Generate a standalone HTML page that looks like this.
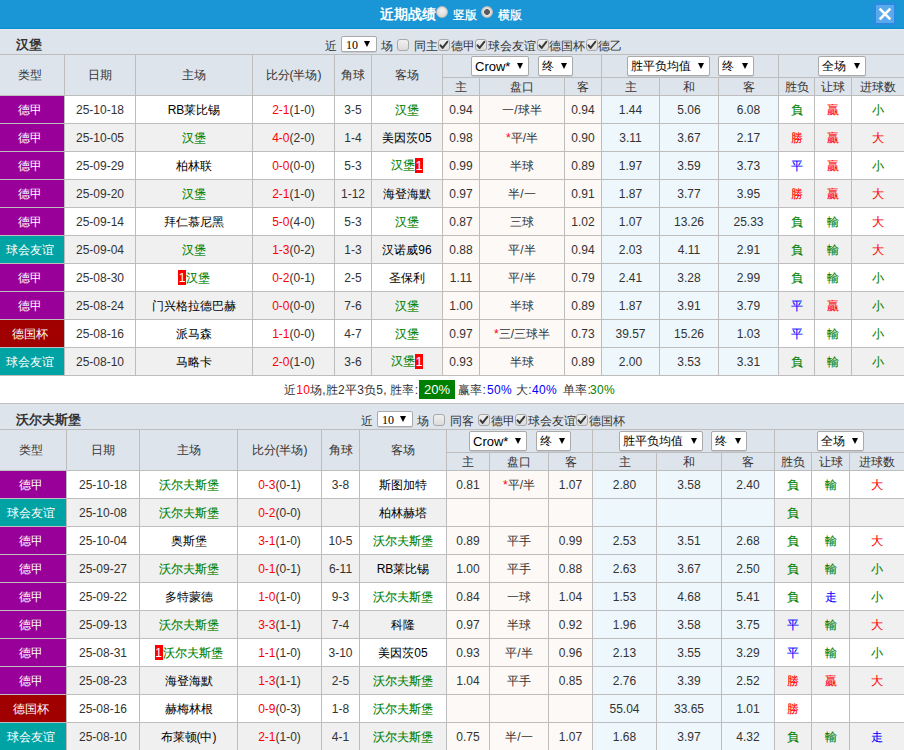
<!DOCTYPE html><html><head><meta charset="utf-8"><style>
*{margin:0;padding:0;box-sizing:content-box}
html,body{width:904px;height:750px;overflow:hidden;background:#fff}
body{position:relative;font-family:"Liberation Sans",sans-serif;font-size:12px;color:#333}
body>div{position:absolute}
.k{-webkit-text-stroke:0.1px}
.c{display:flex;align-items:center;justify-content:center;white-space:nowrap;line-height:14px}
.t{white-space:nowrap;line-height:14px}
.bd{display:inline-block;background:#f00;color:#fff;font-weight:normal;width:8px;height:15px;line-height:17px;text-align:center;font-size:12px;vertical-align:top}
.sel{background:#fff;border:1px solid #aaa;border-radius:2px;box-sizing:border-box;color:#000;font-size:12px;line-height:18px;box-shadow:0 1px 0 rgba(0,0,0,.10)}
.sel .st{position:absolute;left:3px;top:0}
.sel .arr{position:absolute;right:5px;top:6px;width:0;height:0;border-left:3.5px solid transparent;border-right:3.5px solid transparent;border-top:6px solid #000}
.s10{font-family:"Liberation Serif",serif;font-size:12px;line-height:15px;border-radius:2px}
.s10 .st{left:4px;top:1px}
.s10 .arr{left:22px;right:auto;top:4px;border-top-width:6px}
.cb{width:10px;height:10px;border:1px solid #a8a8a8;border-radius:3px;background:linear-gradient(#f0f0f0,#dcdcdc)}
.cb svg{position:absolute;left:-1px;top:-1px}
.radio{width:12px;height:12px;border-radius:50%;background:radial-gradient(circle at 50% 40%,#f4f4f4,#cfcfcf);border:1px solid #bbb;box-sizing:border-box}
.radio.on{background:radial-gradient(circle at 50% 50%,#5a5a5a 0,#5a5a5a 2.6px,#e8e8e8 3.2px,#c8c8c8 6px)}
.gb{display:inline-block;background:#008000;color:#fff;padding:0 5px;line-height:19px;font-size:13px}
</style></head><body><div style="left:0px;top:0px;width:904px;height:28px;background:#1a96d6"></div>
<div style="left:0px;top:28px;width:904px;height:1px;background:#0b8dd3"></div>
<div class="t" style="left:380px;top:6px;color:#fff;font-weight:bold;font-size:14px;line-height:16px">近期战绩</div>
<div class="radio" style="left:436px;top:6px"></div>
<div class="t" style="left:453px;top:7px;color:#fff;font-size:12px;line-height:14px;top:8px;-webkit-text-stroke:0.3px #fff">竖版</div>
<div class="radio on" style="left:481px;top:6px"></div>
<div class="t" style="left:498px;top:7px;color:#fff;font-size:12px;line-height:14px;top:8px;-webkit-text-stroke:0.3px #fff">横版</div>
<div style="left:874px;top:3px;width:18px;height:18px;border:2px solid #2b89e1;background:#5aa9ea"><svg width="18" height="18" viewBox="0 0 18 18"><path d="M4.6 4.6 L13.4 13.4 M13.4 4.6 L4.6 13.4" stroke="#fff" stroke-width="2.6" stroke-linecap="square"/></svg></div>
<div style="left:0px;top:29px;width:904px;height:1px;background:#e8eaef"></div>
<div style="left:0px;top:30px;width:904px;height:24px;background:#dee4ec"></div>
<div class="t" style="left:16px;top:37px;font-weight:bold;font-size:13px;line-height:16px;color:#333">汉堡</div>
<div class="t" style="left:325px;top:39px;">近</div>
<div class="sel s10" style="left:341px;top:36px;width:36px;height:16px"><span class="st">10</span><span class="arr"></span></div>
<div class="t" style="left:381px;top:39px;">场</div>
<div class="cb" style="left:397px;top:39px"></div>
<div class="t" style="left:414px;top:39px;">同主</div>
<div class="cb" style="left:438px;top:39px"><svg width="12" height="12" viewBox="0 0 12 12"><path d="M2.5 6.3 L4.6 8.9 L9.3 2.8" stroke="#3a3a3a" stroke-width="2" fill="none" stroke-linecap="round" stroke-linejoin="round"/></svg></div>
<div class="t" style="left:451px;top:39px;">德甲</div>
<div class="cb" style="left:475px;top:39px"><svg width="12" height="12" viewBox="0 0 12 12"><path d="M2.5 6.3 L4.6 8.9 L9.3 2.8" stroke="#3a3a3a" stroke-width="2" fill="none" stroke-linecap="round" stroke-linejoin="round"/></svg></div>
<div class="t" style="left:488px;top:39px;">球会友谊</div>
<div class="cb" style="left:537px;top:39px"><svg width="12" height="12" viewBox="0 0 12 12"><path d="M2.5 6.3 L4.6 8.9 L9.3 2.8" stroke="#3a3a3a" stroke-width="2" fill="none" stroke-linecap="round" stroke-linejoin="round"/></svg></div>
<div class="t" style="left:549px;top:39px;">德国杯</div>
<div class="cb" style="left:586px;top:39px"><svg width="12" height="12" viewBox="0 0 12 12"><path d="M2.5 6.3 L4.6 8.9 L9.3 2.8" stroke="#3a3a3a" stroke-width="2" fill="none" stroke-linecap="round" stroke-linejoin="round"/></svg></div>
<div class="t" style="left:598px;top:39px;">德乙</div>
<div style="left:0px;top:54px;width:904px;height:1px;background:#bdbdbd"></div>
<div style="left:0px;top:55px;width:904px;height:40px;background:#dee4ec"></div>
<div style="left:0px;top:95px;width:904px;height:1px;background:#bdbdbd"></div>
<div style="left:64px;top:54px;width:1px;height:41px;background:#bdbdbd"></div>
<div style="left:135px;top:54px;width:1px;height:41px;background:#bdbdbd"></div>
<div style="left:252px;top:54px;width:1px;height:41px;background:#bdbdbd"></div>
<div style="left:334px;top:54px;width:1px;height:41px;background:#bdbdbd"></div>
<div style="left:371px;top:54px;width:1px;height:41px;background:#bdbdbd"></div>
<div style="left:442px;top:54px;width:1px;height:41px;background:#bdbdbd"></div>
<div style="left:601px;top:54px;width:1px;height:41px;background:#bdbdbd"></div>
<div style="left:778px;top:54px;width:1px;height:41px;background:#bdbdbd"></div>
<div style="left:479px;top:77px;width:1px;height:18px;background:#bdbdbd"></div>
<div style="left:564px;top:77px;width:1px;height:18px;background:#bdbdbd"></div>
<div style="left:659px;top:77px;width:1px;height:18px;background:#bdbdbd"></div>
<div style="left:718px;top:77px;width:1px;height:18px;background:#bdbdbd"></div>
<div style="left:814px;top:77px;width:1px;height:18px;background:#bdbdbd"></div>
<div style="left:851px;top:77px;width:1px;height:18px;background:#bdbdbd"></div>
<div style="left:442px;top:77px;width:462px;height:1px;background:#bdbdbd"></div>
<div class="c" style="left:-5px;top:55px;width:69px;height:40px;">类型</div>
<div class="c" style="left:65px;top:55px;width:70px;height:40px;">日期</div>
<div class="c" style="left:136px;top:55px;width:116px;height:40px;">主场</div>
<div class="c" style="left:253px;top:55px;width:81px;height:40px;">比分(半场)</div>
<div class="c" style="left:335px;top:55px;width:36px;height:40px;">角球</div>
<div class="c" style="left:372px;top:55px;width:70px;height:40px;">客场</div>
<div class="c" style="left:443px;top:78px;width:36px;height:17px;">主</div>
<div class="c" style="left:480px;top:78px;width:84px;height:17px;">盘口</div>
<div class="c" style="left:565px;top:78px;width:36px;height:17px;">客</div>
<div class="c" style="left:602px;top:78px;width:57px;height:17px;">主</div>
<div class="c" style="left:660px;top:78px;width:58px;height:17px;">和</div>
<div class="c" style="left:719px;top:78px;width:59px;height:17px;">客</div>
<div class="c" style="left:779px;top:78px;width:35px;height:17px;">胜负</div>
<div class="c" style="left:815px;top:78px;width:36px;height:17px;">让球</div>
<div class="c" style="left:852px;top:78px;width:52px;height:17px;">进球数</div>
<div class="sel" style="left:471px;top:56px;width:58px;height:20px"><span class="st" style="font-size:13px;top:1px">Crow*</span><span class="arr"></span></div>
<div class="sel" style="left:538px;top:56px;width:35px;height:20px"><span class="st">终</span><span class="arr"></span></div>
<div class="sel" style="left:627px;top:56px;width:83px;height:20px"><span class="st">胜平负均值</span><span class="arr"></span></div>
<div class="sel" style="left:718px;top:56px;width:36px;height:20px"><span class="st">终</span><span class="arr"></span></div>
<div class="sel" style="left:818px;top:56px;width:48px;height:20px"><span class="st">全场</span><span class="arr"></span></div>
<div style="left:64px;top:96px;width:379px;height:27px;background:#ffffff"></div>
<div style="left:442px;top:96px;width:160px;height:27px;background:#fdf9f7"></div>
<div style="left:601px;top:96px;width:178px;height:27px;background:#eef7fc"></div>
<div style="left:778px;top:96px;width:126px;height:27px;background:#ffffff"></div>
<div style="left:0px;top:96px;width:64px;height:27px;background:#990099"></div>
<div style="left:0px;top:123px;width:904px;height:1px;background:#bdbdbd"></div>
<div style="left:64px;top:96px;width:1px;height:27px;background:#bdbdbd"></div>
<div style="left:135px;top:96px;width:1px;height:27px;background:#bdbdbd"></div>
<div style="left:252px;top:96px;width:1px;height:27px;background:#bdbdbd"></div>
<div style="left:334px;top:96px;width:1px;height:27px;background:#bdbdbd"></div>
<div style="left:371px;top:96px;width:1px;height:27px;background:#bdbdbd"></div>
<div style="left:442px;top:96px;width:1px;height:27px;background:#bdbdbd"></div>
<div style="left:479px;top:96px;width:1px;height:27px;background:#bdbdbd"></div>
<div style="left:564px;top:96px;width:1px;height:27px;background:#bdbdbd"></div>
<div style="left:601px;top:96px;width:1px;height:27px;background:#bdbdbd"></div>
<div style="left:659px;top:96px;width:1px;height:27px;background:#bdbdbd"></div>
<div style="left:718px;top:96px;width:1px;height:27px;background:#bdbdbd"></div>
<div style="left:778px;top:96px;width:1px;height:27px;background:#bdbdbd"></div>
<div style="left:814px;top:96px;width:1px;height:27px;background:#bdbdbd"></div>
<div style="left:851px;top:96px;width:1px;height:27px;background:#bdbdbd"></div>
<div class="c" style="left:-5px;top:96px;width:69px;height:27px;color:#fff">德甲</div>
<div class="c" style="left:65px;top:96px;width:70px;height:27px;">25-10-18</div>
<div class="c" style="left:136px;top:96px;width:116px;height:27px;color:#000">RB莱比锡</div>
<div class="c" style="left:253px;top:96px;width:81px;height:27px;"><span style="color:#ff0000">2-1</span>(1-0)</div>
<div class="c" style="left:335px;top:96px;width:36px;height:27px;">3-5</div>
<div class="c" style="left:372px;top:96px;width:70px;height:27px;color:#000"><span class="k" style="color:#008000">汉堡</span></div>
<div class="c" style="left:443px;top:96px;width:36px;height:27px;">0.94</div>
<div class="c" style="left:480px;top:96px;width:84px;height:27px;">一/球半</div>
<div class="c" style="left:565px;top:96px;width:36px;height:27px;">0.94</div>
<div class="c" style="left:602px;top:96px;width:57px;height:27px;">1.44</div>
<div class="c" style="left:660px;top:96px;width:58px;height:27px;">5.06</div>
<div class="c" style="left:719px;top:96px;width:59px;height:27px;">6.08</div>
<div class="c" style="left:779px;top:96px;width:35px;height:27px;"><span class="k" style="color:#008000">負</span></div>
<div class="c" style="left:815px;top:96px;width:36px;height:27px;"><span class="k" style="color:#ff0000">贏</span></div>
<div class="c" style="left:852px;top:96px;width:52px;height:27px;"><span class="k" style="color:#008000">小</span></div>
<div style="left:64px;top:124px;width:379px;height:27px;background:#f0f0f0"></div>
<div style="left:442px;top:124px;width:160px;height:27px;background:#fdf9f7"></div>
<div style="left:601px;top:124px;width:178px;height:27px;background:#eef7fc"></div>
<div style="left:778px;top:124px;width:126px;height:27px;background:#f0f0f0"></div>
<div style="left:0px;top:124px;width:64px;height:27px;background:#990099"></div>
<div style="left:0px;top:151px;width:904px;height:1px;background:#bdbdbd"></div>
<div style="left:64px;top:124px;width:1px;height:27px;background:#bdbdbd"></div>
<div style="left:135px;top:124px;width:1px;height:27px;background:#bdbdbd"></div>
<div style="left:252px;top:124px;width:1px;height:27px;background:#bdbdbd"></div>
<div style="left:334px;top:124px;width:1px;height:27px;background:#bdbdbd"></div>
<div style="left:371px;top:124px;width:1px;height:27px;background:#bdbdbd"></div>
<div style="left:442px;top:124px;width:1px;height:27px;background:#bdbdbd"></div>
<div style="left:479px;top:124px;width:1px;height:27px;background:#bdbdbd"></div>
<div style="left:564px;top:124px;width:1px;height:27px;background:#bdbdbd"></div>
<div style="left:601px;top:124px;width:1px;height:27px;background:#bdbdbd"></div>
<div style="left:659px;top:124px;width:1px;height:27px;background:#bdbdbd"></div>
<div style="left:718px;top:124px;width:1px;height:27px;background:#bdbdbd"></div>
<div style="left:778px;top:124px;width:1px;height:27px;background:#bdbdbd"></div>
<div style="left:814px;top:124px;width:1px;height:27px;background:#bdbdbd"></div>
<div style="left:851px;top:124px;width:1px;height:27px;background:#bdbdbd"></div>
<div class="c" style="left:-5px;top:124px;width:69px;height:27px;color:#fff">德甲</div>
<div class="c" style="left:65px;top:124px;width:70px;height:27px;">25-10-05</div>
<div class="c" style="left:136px;top:124px;width:116px;height:27px;color:#000"><span class="k" style="color:#008000">汉堡</span></div>
<div class="c" style="left:253px;top:124px;width:81px;height:27px;"><span style="color:#ff0000">4-0</span>(2-0)</div>
<div class="c" style="left:335px;top:124px;width:36px;height:27px;">1-4</div>
<div class="c" style="left:372px;top:124px;width:70px;height:27px;color:#000">美因茨05</div>
<div class="c" style="left:443px;top:124px;width:36px;height:27px;">0.98</div>
<div class="c" style="left:480px;top:124px;width:84px;height:27px;"><span style="color:#ff0000">*</span>平/半</div>
<div class="c" style="left:565px;top:124px;width:36px;height:27px;">0.90</div>
<div class="c" style="left:602px;top:124px;width:57px;height:27px;">3.11</div>
<div class="c" style="left:660px;top:124px;width:58px;height:27px;">3.67</div>
<div class="c" style="left:719px;top:124px;width:59px;height:27px;">2.17</div>
<div class="c" style="left:779px;top:124px;width:35px;height:27px;"><span class="k" style="color:#ff0000">勝</span></div>
<div class="c" style="left:815px;top:124px;width:36px;height:27px;"><span class="k" style="color:#ff0000">贏</span></div>
<div class="c" style="left:852px;top:124px;width:52px;height:27px;"><span class="k" style="color:#ff0000">大</span></div>
<div style="left:64px;top:152px;width:379px;height:27px;background:#ffffff"></div>
<div style="left:442px;top:152px;width:160px;height:27px;background:#fdf9f7"></div>
<div style="left:601px;top:152px;width:178px;height:27px;background:#eef7fc"></div>
<div style="left:778px;top:152px;width:126px;height:27px;background:#ffffff"></div>
<div style="left:0px;top:152px;width:64px;height:27px;background:#990099"></div>
<div style="left:0px;top:179px;width:904px;height:1px;background:#bdbdbd"></div>
<div style="left:64px;top:152px;width:1px;height:27px;background:#bdbdbd"></div>
<div style="left:135px;top:152px;width:1px;height:27px;background:#bdbdbd"></div>
<div style="left:252px;top:152px;width:1px;height:27px;background:#bdbdbd"></div>
<div style="left:334px;top:152px;width:1px;height:27px;background:#bdbdbd"></div>
<div style="left:371px;top:152px;width:1px;height:27px;background:#bdbdbd"></div>
<div style="left:442px;top:152px;width:1px;height:27px;background:#bdbdbd"></div>
<div style="left:479px;top:152px;width:1px;height:27px;background:#bdbdbd"></div>
<div style="left:564px;top:152px;width:1px;height:27px;background:#bdbdbd"></div>
<div style="left:601px;top:152px;width:1px;height:27px;background:#bdbdbd"></div>
<div style="left:659px;top:152px;width:1px;height:27px;background:#bdbdbd"></div>
<div style="left:718px;top:152px;width:1px;height:27px;background:#bdbdbd"></div>
<div style="left:778px;top:152px;width:1px;height:27px;background:#bdbdbd"></div>
<div style="left:814px;top:152px;width:1px;height:27px;background:#bdbdbd"></div>
<div style="left:851px;top:152px;width:1px;height:27px;background:#bdbdbd"></div>
<div class="c" style="left:-5px;top:152px;width:69px;height:27px;color:#fff">德甲</div>
<div class="c" style="left:65px;top:152px;width:70px;height:27px;">25-09-29</div>
<div class="c" style="left:136px;top:152px;width:116px;height:27px;color:#000">柏林联</div>
<div class="c" style="left:253px;top:152px;width:81px;height:27px;"><span style="color:#ff0000">0-0</span>(0-0)</div>
<div class="c" style="left:335px;top:152px;width:36px;height:27px;">5-3</div>
<div class="c" style="left:372px;top:152px;width:70px;height:27px;color:#000"><span class="k" style="color:#008000">汉堡<span class="bd">1</span></span></div>
<div class="c" style="left:443px;top:152px;width:36px;height:27px;">0.99</div>
<div class="c" style="left:480px;top:152px;width:84px;height:27px;">半球</div>
<div class="c" style="left:565px;top:152px;width:36px;height:27px;">0.89</div>
<div class="c" style="left:602px;top:152px;width:57px;height:27px;">1.97</div>
<div class="c" style="left:660px;top:152px;width:58px;height:27px;">3.59</div>
<div class="c" style="left:719px;top:152px;width:59px;height:27px;">3.73</div>
<div class="c" style="left:779px;top:152px;width:35px;height:27px;"><span class="k" style="color:#0000ff">平</span></div>
<div class="c" style="left:815px;top:152px;width:36px;height:27px;"><span class="k" style="color:#ff0000">贏</span></div>
<div class="c" style="left:852px;top:152px;width:52px;height:27px;"><span class="k" style="color:#008000">小</span></div>
<div style="left:64px;top:180px;width:379px;height:27px;background:#f0f0f0"></div>
<div style="left:442px;top:180px;width:160px;height:27px;background:#fdf9f7"></div>
<div style="left:601px;top:180px;width:178px;height:27px;background:#eef7fc"></div>
<div style="left:778px;top:180px;width:126px;height:27px;background:#f0f0f0"></div>
<div style="left:0px;top:180px;width:64px;height:27px;background:#990099"></div>
<div style="left:0px;top:207px;width:904px;height:1px;background:#bdbdbd"></div>
<div style="left:64px;top:180px;width:1px;height:27px;background:#bdbdbd"></div>
<div style="left:135px;top:180px;width:1px;height:27px;background:#bdbdbd"></div>
<div style="left:252px;top:180px;width:1px;height:27px;background:#bdbdbd"></div>
<div style="left:334px;top:180px;width:1px;height:27px;background:#bdbdbd"></div>
<div style="left:371px;top:180px;width:1px;height:27px;background:#bdbdbd"></div>
<div style="left:442px;top:180px;width:1px;height:27px;background:#bdbdbd"></div>
<div style="left:479px;top:180px;width:1px;height:27px;background:#bdbdbd"></div>
<div style="left:564px;top:180px;width:1px;height:27px;background:#bdbdbd"></div>
<div style="left:601px;top:180px;width:1px;height:27px;background:#bdbdbd"></div>
<div style="left:659px;top:180px;width:1px;height:27px;background:#bdbdbd"></div>
<div style="left:718px;top:180px;width:1px;height:27px;background:#bdbdbd"></div>
<div style="left:778px;top:180px;width:1px;height:27px;background:#bdbdbd"></div>
<div style="left:814px;top:180px;width:1px;height:27px;background:#bdbdbd"></div>
<div style="left:851px;top:180px;width:1px;height:27px;background:#bdbdbd"></div>
<div class="c" style="left:-5px;top:180px;width:69px;height:27px;color:#fff">德甲</div>
<div class="c" style="left:65px;top:180px;width:70px;height:27px;">25-09-20</div>
<div class="c" style="left:136px;top:180px;width:116px;height:27px;color:#000"><span class="k" style="color:#008000">汉堡</span></div>
<div class="c" style="left:253px;top:180px;width:81px;height:27px;"><span style="color:#ff0000">2-1</span>(1-0)</div>
<div class="c" style="left:335px;top:180px;width:36px;height:27px;">1-12</div>
<div class="c" style="left:372px;top:180px;width:70px;height:27px;color:#000">海登海默</div>
<div class="c" style="left:443px;top:180px;width:36px;height:27px;">0.97</div>
<div class="c" style="left:480px;top:180px;width:84px;height:27px;">半/一</div>
<div class="c" style="left:565px;top:180px;width:36px;height:27px;">0.91</div>
<div class="c" style="left:602px;top:180px;width:57px;height:27px;">1.87</div>
<div class="c" style="left:660px;top:180px;width:58px;height:27px;">3.77</div>
<div class="c" style="left:719px;top:180px;width:59px;height:27px;">3.95</div>
<div class="c" style="left:779px;top:180px;width:35px;height:27px;"><span class="k" style="color:#ff0000">勝</span></div>
<div class="c" style="left:815px;top:180px;width:36px;height:27px;"><span class="k" style="color:#ff0000">贏</span></div>
<div class="c" style="left:852px;top:180px;width:52px;height:27px;"><span class="k" style="color:#ff0000">大</span></div>
<div style="left:64px;top:208px;width:379px;height:27px;background:#ffffff"></div>
<div style="left:442px;top:208px;width:160px;height:27px;background:#fdf9f7"></div>
<div style="left:601px;top:208px;width:178px;height:27px;background:#eef7fc"></div>
<div style="left:778px;top:208px;width:126px;height:27px;background:#ffffff"></div>
<div style="left:0px;top:208px;width:64px;height:27px;background:#990099"></div>
<div style="left:0px;top:235px;width:904px;height:1px;background:#bdbdbd"></div>
<div style="left:64px;top:208px;width:1px;height:27px;background:#bdbdbd"></div>
<div style="left:135px;top:208px;width:1px;height:27px;background:#bdbdbd"></div>
<div style="left:252px;top:208px;width:1px;height:27px;background:#bdbdbd"></div>
<div style="left:334px;top:208px;width:1px;height:27px;background:#bdbdbd"></div>
<div style="left:371px;top:208px;width:1px;height:27px;background:#bdbdbd"></div>
<div style="left:442px;top:208px;width:1px;height:27px;background:#bdbdbd"></div>
<div style="left:479px;top:208px;width:1px;height:27px;background:#bdbdbd"></div>
<div style="left:564px;top:208px;width:1px;height:27px;background:#bdbdbd"></div>
<div style="left:601px;top:208px;width:1px;height:27px;background:#bdbdbd"></div>
<div style="left:659px;top:208px;width:1px;height:27px;background:#bdbdbd"></div>
<div style="left:718px;top:208px;width:1px;height:27px;background:#bdbdbd"></div>
<div style="left:778px;top:208px;width:1px;height:27px;background:#bdbdbd"></div>
<div style="left:814px;top:208px;width:1px;height:27px;background:#bdbdbd"></div>
<div style="left:851px;top:208px;width:1px;height:27px;background:#bdbdbd"></div>
<div class="c" style="left:-5px;top:208px;width:69px;height:27px;color:#fff">德甲</div>
<div class="c" style="left:65px;top:208px;width:70px;height:27px;">25-09-14</div>
<div class="c" style="left:136px;top:208px;width:116px;height:27px;color:#000">拜仁慕尼黑</div>
<div class="c" style="left:253px;top:208px;width:81px;height:27px;"><span style="color:#ff0000">5-0</span>(4-0)</div>
<div class="c" style="left:335px;top:208px;width:36px;height:27px;">5-3</div>
<div class="c" style="left:372px;top:208px;width:70px;height:27px;color:#000"><span class="k" style="color:#008000">汉堡</span></div>
<div class="c" style="left:443px;top:208px;width:36px;height:27px;">0.87</div>
<div class="c" style="left:480px;top:208px;width:84px;height:27px;">三球</div>
<div class="c" style="left:565px;top:208px;width:36px;height:27px;">1.02</div>
<div class="c" style="left:602px;top:208px;width:57px;height:27px;">1.07</div>
<div class="c" style="left:660px;top:208px;width:58px;height:27px;">13.26</div>
<div class="c" style="left:719px;top:208px;width:59px;height:27px;">25.33</div>
<div class="c" style="left:779px;top:208px;width:35px;height:27px;"><span class="k" style="color:#008000">負</span></div>
<div class="c" style="left:815px;top:208px;width:36px;height:27px;"><span class="k" style="color:#008000">輸</span></div>
<div class="c" style="left:852px;top:208px;width:52px;height:27px;"><span class="k" style="color:#ff0000">大</span></div>
<div style="left:64px;top:236px;width:379px;height:27px;background:#f0f0f0"></div>
<div style="left:442px;top:236px;width:160px;height:27px;background:#fdf9f7"></div>
<div style="left:601px;top:236px;width:178px;height:27px;background:#eef7fc"></div>
<div style="left:778px;top:236px;width:126px;height:27px;background:#f0f0f0"></div>
<div style="left:0px;top:236px;width:64px;height:27px;background:#00a3a3"></div>
<div style="left:0px;top:263px;width:904px;height:1px;background:#bdbdbd"></div>
<div style="left:64px;top:236px;width:1px;height:27px;background:#bdbdbd"></div>
<div style="left:135px;top:236px;width:1px;height:27px;background:#bdbdbd"></div>
<div style="left:252px;top:236px;width:1px;height:27px;background:#bdbdbd"></div>
<div style="left:334px;top:236px;width:1px;height:27px;background:#bdbdbd"></div>
<div style="left:371px;top:236px;width:1px;height:27px;background:#bdbdbd"></div>
<div style="left:442px;top:236px;width:1px;height:27px;background:#bdbdbd"></div>
<div style="left:479px;top:236px;width:1px;height:27px;background:#bdbdbd"></div>
<div style="left:564px;top:236px;width:1px;height:27px;background:#bdbdbd"></div>
<div style="left:601px;top:236px;width:1px;height:27px;background:#bdbdbd"></div>
<div style="left:659px;top:236px;width:1px;height:27px;background:#bdbdbd"></div>
<div style="left:718px;top:236px;width:1px;height:27px;background:#bdbdbd"></div>
<div style="left:778px;top:236px;width:1px;height:27px;background:#bdbdbd"></div>
<div style="left:814px;top:236px;width:1px;height:27px;background:#bdbdbd"></div>
<div style="left:851px;top:236px;width:1px;height:27px;background:#bdbdbd"></div>
<div class="c" style="left:-5px;top:236px;width:69px;height:27px;color:#fff">球会友谊</div>
<div class="c" style="left:65px;top:236px;width:70px;height:27px;">25-09-04</div>
<div class="c" style="left:136px;top:236px;width:116px;height:27px;color:#000"><span class="k" style="color:#008000">汉堡</span></div>
<div class="c" style="left:253px;top:236px;width:81px;height:27px;"><span style="color:#ff0000">1-3</span>(0-2)</div>
<div class="c" style="left:335px;top:236px;width:36px;height:27px;">1-3</div>
<div class="c" style="left:372px;top:236px;width:70px;height:27px;color:#000">汉诺威96</div>
<div class="c" style="left:443px;top:236px;width:36px;height:27px;">0.88</div>
<div class="c" style="left:480px;top:236px;width:84px;height:27px;">平/半</div>
<div class="c" style="left:565px;top:236px;width:36px;height:27px;">0.94</div>
<div class="c" style="left:602px;top:236px;width:57px;height:27px;">2.03</div>
<div class="c" style="left:660px;top:236px;width:58px;height:27px;">4.11</div>
<div class="c" style="left:719px;top:236px;width:59px;height:27px;">2.91</div>
<div class="c" style="left:779px;top:236px;width:35px;height:27px;"><span class="k" style="color:#008000">負</span></div>
<div class="c" style="left:815px;top:236px;width:36px;height:27px;"><span class="k" style="color:#008000">輸</span></div>
<div class="c" style="left:852px;top:236px;width:52px;height:27px;"><span class="k" style="color:#ff0000">大</span></div>
<div style="left:64px;top:264px;width:379px;height:27px;background:#ffffff"></div>
<div style="left:442px;top:264px;width:160px;height:27px;background:#fdf9f7"></div>
<div style="left:601px;top:264px;width:178px;height:27px;background:#eef7fc"></div>
<div style="left:778px;top:264px;width:126px;height:27px;background:#ffffff"></div>
<div style="left:0px;top:264px;width:64px;height:27px;background:#990099"></div>
<div style="left:0px;top:291px;width:904px;height:1px;background:#bdbdbd"></div>
<div style="left:64px;top:264px;width:1px;height:27px;background:#bdbdbd"></div>
<div style="left:135px;top:264px;width:1px;height:27px;background:#bdbdbd"></div>
<div style="left:252px;top:264px;width:1px;height:27px;background:#bdbdbd"></div>
<div style="left:334px;top:264px;width:1px;height:27px;background:#bdbdbd"></div>
<div style="left:371px;top:264px;width:1px;height:27px;background:#bdbdbd"></div>
<div style="left:442px;top:264px;width:1px;height:27px;background:#bdbdbd"></div>
<div style="left:479px;top:264px;width:1px;height:27px;background:#bdbdbd"></div>
<div style="left:564px;top:264px;width:1px;height:27px;background:#bdbdbd"></div>
<div style="left:601px;top:264px;width:1px;height:27px;background:#bdbdbd"></div>
<div style="left:659px;top:264px;width:1px;height:27px;background:#bdbdbd"></div>
<div style="left:718px;top:264px;width:1px;height:27px;background:#bdbdbd"></div>
<div style="left:778px;top:264px;width:1px;height:27px;background:#bdbdbd"></div>
<div style="left:814px;top:264px;width:1px;height:27px;background:#bdbdbd"></div>
<div style="left:851px;top:264px;width:1px;height:27px;background:#bdbdbd"></div>
<div class="c" style="left:-5px;top:264px;width:69px;height:27px;color:#fff">德甲</div>
<div class="c" style="left:65px;top:264px;width:70px;height:27px;">25-08-30</div>
<div class="c" style="left:136px;top:264px;width:116px;height:27px;color:#000"><span class="bd">1</span><span class="k" style="color:#008000">汉堡</span></div>
<div class="c" style="left:253px;top:264px;width:81px;height:27px;"><span style="color:#ff0000">0-2</span>(0-1)</div>
<div class="c" style="left:335px;top:264px;width:36px;height:27px;">2-5</div>
<div class="c" style="left:372px;top:264px;width:70px;height:27px;color:#000">圣保利</div>
<div class="c" style="left:443px;top:264px;width:36px;height:27px;">1.11</div>
<div class="c" style="left:480px;top:264px;width:84px;height:27px;">平/半</div>
<div class="c" style="left:565px;top:264px;width:36px;height:27px;">0.79</div>
<div class="c" style="left:602px;top:264px;width:57px;height:27px;">2.41</div>
<div class="c" style="left:660px;top:264px;width:58px;height:27px;">3.28</div>
<div class="c" style="left:719px;top:264px;width:59px;height:27px;">2.99</div>
<div class="c" style="left:779px;top:264px;width:35px;height:27px;"><span class="k" style="color:#008000">負</span></div>
<div class="c" style="left:815px;top:264px;width:36px;height:27px;"><span class="k" style="color:#008000">輸</span></div>
<div class="c" style="left:852px;top:264px;width:52px;height:27px;"><span class="k" style="color:#008000">小</span></div>
<div style="left:64px;top:292px;width:379px;height:27px;background:#f0f0f0"></div>
<div style="left:442px;top:292px;width:160px;height:27px;background:#fdf9f7"></div>
<div style="left:601px;top:292px;width:178px;height:27px;background:#eef7fc"></div>
<div style="left:778px;top:292px;width:126px;height:27px;background:#f0f0f0"></div>
<div style="left:0px;top:292px;width:64px;height:27px;background:#990099"></div>
<div style="left:0px;top:319px;width:904px;height:1px;background:#bdbdbd"></div>
<div style="left:64px;top:292px;width:1px;height:27px;background:#bdbdbd"></div>
<div style="left:135px;top:292px;width:1px;height:27px;background:#bdbdbd"></div>
<div style="left:252px;top:292px;width:1px;height:27px;background:#bdbdbd"></div>
<div style="left:334px;top:292px;width:1px;height:27px;background:#bdbdbd"></div>
<div style="left:371px;top:292px;width:1px;height:27px;background:#bdbdbd"></div>
<div style="left:442px;top:292px;width:1px;height:27px;background:#bdbdbd"></div>
<div style="left:479px;top:292px;width:1px;height:27px;background:#bdbdbd"></div>
<div style="left:564px;top:292px;width:1px;height:27px;background:#bdbdbd"></div>
<div style="left:601px;top:292px;width:1px;height:27px;background:#bdbdbd"></div>
<div style="left:659px;top:292px;width:1px;height:27px;background:#bdbdbd"></div>
<div style="left:718px;top:292px;width:1px;height:27px;background:#bdbdbd"></div>
<div style="left:778px;top:292px;width:1px;height:27px;background:#bdbdbd"></div>
<div style="left:814px;top:292px;width:1px;height:27px;background:#bdbdbd"></div>
<div style="left:851px;top:292px;width:1px;height:27px;background:#bdbdbd"></div>
<div class="c" style="left:-5px;top:292px;width:69px;height:27px;color:#fff">德甲</div>
<div class="c" style="left:65px;top:292px;width:70px;height:27px;">25-08-24</div>
<div class="c" style="left:136px;top:292px;width:116px;height:27px;color:#000">门兴格拉德巴赫</div>
<div class="c" style="left:253px;top:292px;width:81px;height:27px;"><span style="color:#ff0000">0-0</span>(0-0)</div>
<div class="c" style="left:335px;top:292px;width:36px;height:27px;">7-6</div>
<div class="c" style="left:372px;top:292px;width:70px;height:27px;color:#000"><span class="k" style="color:#008000">汉堡</span></div>
<div class="c" style="left:443px;top:292px;width:36px;height:27px;">1.00</div>
<div class="c" style="left:480px;top:292px;width:84px;height:27px;">半球</div>
<div class="c" style="left:565px;top:292px;width:36px;height:27px;">0.89</div>
<div class="c" style="left:602px;top:292px;width:57px;height:27px;">1.87</div>
<div class="c" style="left:660px;top:292px;width:58px;height:27px;">3.91</div>
<div class="c" style="left:719px;top:292px;width:59px;height:27px;">3.79</div>
<div class="c" style="left:779px;top:292px;width:35px;height:27px;"><span class="k" style="color:#0000ff">平</span></div>
<div class="c" style="left:815px;top:292px;width:36px;height:27px;"><span class="k" style="color:#ff0000">贏</span></div>
<div class="c" style="left:852px;top:292px;width:52px;height:27px;"><span class="k" style="color:#008000">小</span></div>
<div style="left:64px;top:320px;width:379px;height:27px;background:#ffffff"></div>
<div style="left:442px;top:320px;width:160px;height:27px;background:#fdf9f7"></div>
<div style="left:601px;top:320px;width:178px;height:27px;background:#eef7fc"></div>
<div style="left:778px;top:320px;width:126px;height:27px;background:#ffffff"></div>
<div style="left:0px;top:320px;width:64px;height:27px;background:#a00000"></div>
<div style="left:0px;top:347px;width:904px;height:1px;background:#bdbdbd"></div>
<div style="left:64px;top:320px;width:1px;height:27px;background:#bdbdbd"></div>
<div style="left:135px;top:320px;width:1px;height:27px;background:#bdbdbd"></div>
<div style="left:252px;top:320px;width:1px;height:27px;background:#bdbdbd"></div>
<div style="left:334px;top:320px;width:1px;height:27px;background:#bdbdbd"></div>
<div style="left:371px;top:320px;width:1px;height:27px;background:#bdbdbd"></div>
<div style="left:442px;top:320px;width:1px;height:27px;background:#bdbdbd"></div>
<div style="left:479px;top:320px;width:1px;height:27px;background:#bdbdbd"></div>
<div style="left:564px;top:320px;width:1px;height:27px;background:#bdbdbd"></div>
<div style="left:601px;top:320px;width:1px;height:27px;background:#bdbdbd"></div>
<div style="left:659px;top:320px;width:1px;height:27px;background:#bdbdbd"></div>
<div style="left:718px;top:320px;width:1px;height:27px;background:#bdbdbd"></div>
<div style="left:778px;top:320px;width:1px;height:27px;background:#bdbdbd"></div>
<div style="left:814px;top:320px;width:1px;height:27px;background:#bdbdbd"></div>
<div style="left:851px;top:320px;width:1px;height:27px;background:#bdbdbd"></div>
<div class="c" style="left:-5px;top:320px;width:69px;height:27px;color:#fff">德国杯</div>
<div class="c" style="left:65px;top:320px;width:70px;height:27px;">25-08-16</div>
<div class="c" style="left:136px;top:320px;width:116px;height:27px;color:#000">派马森</div>
<div class="c" style="left:253px;top:320px;width:81px;height:27px;"><span style="color:#ff0000">1-1</span>(0-0)</div>
<div class="c" style="left:335px;top:320px;width:36px;height:27px;">4-7</div>
<div class="c" style="left:372px;top:320px;width:70px;height:27px;color:#000"><span class="k" style="color:#008000">汉堡</span></div>
<div class="c" style="left:443px;top:320px;width:36px;height:27px;">0.97</div>
<div class="c" style="left:480px;top:320px;width:84px;height:27px;"><span style="color:#ff0000">*</span>三/三球半</div>
<div class="c" style="left:565px;top:320px;width:36px;height:27px;">0.73</div>
<div class="c" style="left:602px;top:320px;width:57px;height:27px;">39.57</div>
<div class="c" style="left:660px;top:320px;width:58px;height:27px;">15.26</div>
<div class="c" style="left:719px;top:320px;width:59px;height:27px;">1.03</div>
<div class="c" style="left:779px;top:320px;width:35px;height:27px;"><span class="k" style="color:#0000ff">平</span></div>
<div class="c" style="left:815px;top:320px;width:36px;height:27px;"><span class="k" style="color:#008000">輸</span></div>
<div class="c" style="left:852px;top:320px;width:52px;height:27px;"><span class="k" style="color:#008000">小</span></div>
<div style="left:64px;top:348px;width:379px;height:27px;background:#f0f0f0"></div>
<div style="left:442px;top:348px;width:160px;height:27px;background:#fdf9f7"></div>
<div style="left:601px;top:348px;width:178px;height:27px;background:#eef7fc"></div>
<div style="left:778px;top:348px;width:126px;height:27px;background:#f0f0f0"></div>
<div style="left:0px;top:348px;width:64px;height:27px;background:#00a3a3"></div>
<div style="left:0px;top:375px;width:904px;height:1px;background:#bdbdbd"></div>
<div style="left:64px;top:348px;width:1px;height:27px;background:#bdbdbd"></div>
<div style="left:135px;top:348px;width:1px;height:27px;background:#bdbdbd"></div>
<div style="left:252px;top:348px;width:1px;height:27px;background:#bdbdbd"></div>
<div style="left:334px;top:348px;width:1px;height:27px;background:#bdbdbd"></div>
<div style="left:371px;top:348px;width:1px;height:27px;background:#bdbdbd"></div>
<div style="left:442px;top:348px;width:1px;height:27px;background:#bdbdbd"></div>
<div style="left:479px;top:348px;width:1px;height:27px;background:#bdbdbd"></div>
<div style="left:564px;top:348px;width:1px;height:27px;background:#bdbdbd"></div>
<div style="left:601px;top:348px;width:1px;height:27px;background:#bdbdbd"></div>
<div style="left:659px;top:348px;width:1px;height:27px;background:#bdbdbd"></div>
<div style="left:718px;top:348px;width:1px;height:27px;background:#bdbdbd"></div>
<div style="left:778px;top:348px;width:1px;height:27px;background:#bdbdbd"></div>
<div style="left:814px;top:348px;width:1px;height:27px;background:#bdbdbd"></div>
<div style="left:851px;top:348px;width:1px;height:27px;background:#bdbdbd"></div>
<div class="c" style="left:-5px;top:348px;width:69px;height:27px;color:#fff">球会友谊</div>
<div class="c" style="left:65px;top:348px;width:70px;height:27px;">25-08-10</div>
<div class="c" style="left:136px;top:348px;width:116px;height:27px;color:#000">马略卡</div>
<div class="c" style="left:253px;top:348px;width:81px;height:27px;"><span style="color:#ff0000">2-0</span>(1-0)</div>
<div class="c" style="left:335px;top:348px;width:36px;height:27px;">3-6</div>
<div class="c" style="left:372px;top:348px;width:70px;height:27px;color:#000"><span class="k" style="color:#008000">汉堡<span class="bd">1</span></span></div>
<div class="c" style="left:443px;top:348px;width:36px;height:27px;">0.93</div>
<div class="c" style="left:480px;top:348px;width:84px;height:27px;">半球</div>
<div class="c" style="left:565px;top:348px;width:36px;height:27px;">0.89</div>
<div class="c" style="left:602px;top:348px;width:57px;height:27px;">2.00</div>
<div class="c" style="left:660px;top:348px;width:58px;height:27px;">3.53</div>
<div class="c" style="left:719px;top:348px;width:59px;height:27px;">3.31</div>
<div class="c" style="left:779px;top:348px;width:35px;height:27px;"><span class="k" style="color:#008000">負</span></div>
<div class="c" style="left:815px;top:348px;width:36px;height:27px;"><span class="k" style="color:#008000">輸</span></div>
<div class="c" style="left:852px;top:348px;width:52px;height:27px;"><span class="k" style="color:#008000">小</span></div>
<div class="t" style="left:284px;top:382px;font-size:12px;line-height:16px;letter-spacing:0.22px">近<span style="color:#f00">10</span>场,胜2平3负5, 胜率:</div>
<div style="left:419px;top:380px;width:36px;height:19px;background:#008000;color:#fff;font-size:13px;line-height:19px;text-align:center">20%</div>
<div class="t" style="left:458px;top:382px;font-size:12px;line-height:16px;letter-spacing:0.3px">赢率:</div>
<div class="t" style="left:487px;top:382px;font-size:12px;line-height:16px;letter-spacing:0.3px;color:#00f">50%</div>
<div class="t" style="left:516px;top:382px;font-size:12px;line-height:16px;letter-spacing:0.3px">大:</div>
<div class="t" style="left:532px;top:382px;font-size:12px;line-height:16px;letter-spacing:0.3px;color:#00f">40%</div>
<div class="t" style="left:563px;top:382px;font-size:12px;line-height:16px;letter-spacing:0.3px">单率:</div>
<div class="t" style="left:590px;top:382px;font-size:12px;line-height:16px;letter-spacing:0.3px;color:#008000">30%</div>
<div style="left:0px;top:403px;width:904px;height:1px;background:#bdbdbd"></div>
<div style="left:0px;top:404px;width:904px;height:25px;background:#dee4ec"></div>
<div class="t" style="left:16px;top:412px;font-weight:bold;font-size:13px;line-height:16px;color:#333">沃尔夫斯堡</div>
<div class="t" style="left:361px;top:414px;">近</div>
<div class="sel s10" style="left:377px;top:411px;width:36px;height:16px"><span class="st">10</span><span class="arr"></span></div>
<div class="t" style="left:417px;top:414px;">场</div>
<div class="cb" style="left:433px;top:414px"></div>
<div class="t" style="left:450px;top:414px;">同客</div>
<div class="cb" style="left:478px;top:414px"><svg width="12" height="12" viewBox="0 0 12 12"><path d="M2.5 6.3 L4.6 8.9 L9.3 2.8" stroke="#3a3a3a" stroke-width="2" fill="none" stroke-linecap="round" stroke-linejoin="round"/></svg></div>
<div class="t" style="left:491px;top:414px;">德甲</div>
<div class="cb" style="left:515px;top:414px"><svg width="12" height="12" viewBox="0 0 12 12"><path d="M2.5 6.3 L4.6 8.9 L9.3 2.8" stroke="#3a3a3a" stroke-width="2" fill="none" stroke-linecap="round" stroke-linejoin="round"/></svg></div>
<div class="t" style="left:528px;top:414px;">球会友谊</div>
<div class="cb" style="left:576px;top:414px"><svg width="12" height="12" viewBox="0 0 12 12"><path d="M2.5 6.3 L4.6 8.9 L9.3 2.8" stroke="#3a3a3a" stroke-width="2" fill="none" stroke-linecap="round" stroke-linejoin="round"/></svg></div>
<div class="t" style="left:589px;top:414px;">德国杯</div>
<div style="left:0px;top:429px;width:904px;height:1px;background:#bdbdbd"></div>
<div style="left:0px;top:430px;width:904px;height:40px;background:#dee4ec"></div>
<div style="left:0px;top:470px;width:904px;height:1px;background:#bdbdbd"></div>
<div style="left:66px;top:429px;width:1px;height:41px;background:#bdbdbd"></div>
<div style="left:139px;top:429px;width:1px;height:41px;background:#bdbdbd"></div>
<div style="left:237px;top:429px;width:1px;height:41px;background:#bdbdbd"></div>
<div style="left:321px;top:429px;width:1px;height:41px;background:#bdbdbd"></div>
<div style="left:359px;top:429px;width:1px;height:41px;background:#bdbdbd"></div>
<div style="left:446px;top:429px;width:1px;height:41px;background:#bdbdbd"></div>
<div style="left:592px;top:429px;width:1px;height:41px;background:#bdbdbd"></div>
<div style="left:774px;top:429px;width:1px;height:41px;background:#bdbdbd"></div>
<div style="left:489px;top:452px;width:1px;height:18px;background:#bdbdbd"></div>
<div style="left:548px;top:452px;width:1px;height:18px;background:#bdbdbd"></div>
<div style="left:656px;top:452px;width:1px;height:18px;background:#bdbdbd"></div>
<div style="left:721px;top:452px;width:1px;height:18px;background:#bdbdbd"></div>
<div style="left:811px;top:452px;width:1px;height:18px;background:#bdbdbd"></div>
<div style="left:849px;top:452px;width:1px;height:18px;background:#bdbdbd"></div>
<div style="left:446px;top:452px;width:458px;height:1px;background:#bdbdbd"></div>
<div class="c" style="left:-5px;top:430px;width:71px;height:40px;">类型</div>
<div class="c" style="left:67px;top:430px;width:72px;height:40px;">日期</div>
<div class="c" style="left:140px;top:430px;width:97px;height:40px;">主场</div>
<div class="c" style="left:238px;top:430px;width:83px;height:40px;">比分(半场)</div>
<div class="c" style="left:322px;top:430px;width:37px;height:40px;">角球</div>
<div class="c" style="left:360px;top:430px;width:86px;height:40px;">客场</div>
<div class="c" style="left:447px;top:453px;width:42px;height:17px;">主</div>
<div class="c" style="left:490px;top:453px;width:58px;height:17px;">盘口</div>
<div class="c" style="left:549px;top:453px;width:43px;height:17px;">客</div>
<div class="c" style="left:593px;top:453px;width:63px;height:17px;">主</div>
<div class="c" style="left:657px;top:453px;width:64px;height:17px;">和</div>
<div class="c" style="left:722px;top:453px;width:52px;height:17px;">客</div>
<div class="c" style="left:775px;top:453px;width:36px;height:17px;">胜负</div>
<div class="c" style="left:812px;top:453px;width:37px;height:17px;">让球</div>
<div class="c" style="left:850px;top:453px;width:54px;height:17px;">进球数</div>
<div class="sel" style="left:469px;top:431px;width:58px;height:20px"><span class="st" style="font-size:13px;top:1px">Crow*</span><span class="arr"></span></div>
<div class="sel" style="left:536px;top:431px;width:35px;height:20px"><span class="st">终</span><span class="arr"></span></div>
<div class="sel" style="left:619px;top:431px;width:84px;height:20px"><span class="st">胜平负均值</span><span class="arr"></span></div>
<div class="sel" style="left:711px;top:431px;width:36px;height:20px"><span class="st">终</span><span class="arr"></span></div>
<div class="sel" style="left:817px;top:431px;width:47px;height:20px"><span class="st">全场</span><span class="arr"></span></div>
<div style="left:66px;top:471px;width:381px;height:27px;background:#ffffff"></div>
<div style="left:446px;top:471px;width:147px;height:27px;background:#fdf9f7"></div>
<div style="left:592px;top:471px;width:183px;height:27px;background:#eef7fc"></div>
<div style="left:774px;top:471px;width:130px;height:27px;background:#ffffff"></div>
<div style="left:0px;top:471px;width:66px;height:27px;background:#990099"></div>
<div style="left:0px;top:498px;width:904px;height:1px;background:#bdbdbd"></div>
<div style="left:66px;top:471px;width:1px;height:27px;background:#bdbdbd"></div>
<div style="left:139px;top:471px;width:1px;height:27px;background:#bdbdbd"></div>
<div style="left:237px;top:471px;width:1px;height:27px;background:#bdbdbd"></div>
<div style="left:321px;top:471px;width:1px;height:27px;background:#bdbdbd"></div>
<div style="left:359px;top:471px;width:1px;height:27px;background:#bdbdbd"></div>
<div style="left:446px;top:471px;width:1px;height:27px;background:#bdbdbd"></div>
<div style="left:489px;top:471px;width:1px;height:27px;background:#bdbdbd"></div>
<div style="left:548px;top:471px;width:1px;height:27px;background:#bdbdbd"></div>
<div style="left:592px;top:471px;width:1px;height:27px;background:#bdbdbd"></div>
<div style="left:656px;top:471px;width:1px;height:27px;background:#bdbdbd"></div>
<div style="left:721px;top:471px;width:1px;height:27px;background:#bdbdbd"></div>
<div style="left:774px;top:471px;width:1px;height:27px;background:#bdbdbd"></div>
<div style="left:811px;top:471px;width:1px;height:27px;background:#bdbdbd"></div>
<div style="left:849px;top:471px;width:1px;height:27px;background:#bdbdbd"></div>
<div class="c" style="left:-5px;top:471px;width:71px;height:27px;color:#fff">德甲</div>
<div class="c" style="left:67px;top:471px;width:72px;height:27px;">25-10-18</div>
<div class="c" style="left:140px;top:471px;width:97px;height:27px;color:#000"><span class="k" style="color:#008000">沃尔夫斯堡</span></div>
<div class="c" style="left:238px;top:471px;width:83px;height:27px;"><span style="color:#ff0000">0-3</span>(0-1)</div>
<div class="c" style="left:322px;top:471px;width:37px;height:27px;">3-8</div>
<div class="c" style="left:360px;top:471px;width:86px;height:27px;color:#000">斯图加特</div>
<div class="c" style="left:447px;top:471px;width:42px;height:27px;">0.81</div>
<div class="c" style="left:490px;top:471px;width:58px;height:27px;"><span style="color:#ff0000">*</span>平/半</div>
<div class="c" style="left:549px;top:471px;width:43px;height:27px;">1.07</div>
<div class="c" style="left:593px;top:471px;width:63px;height:27px;">2.80</div>
<div class="c" style="left:657px;top:471px;width:64px;height:27px;">3.58</div>
<div class="c" style="left:722px;top:471px;width:52px;height:27px;">2.40</div>
<div class="c" style="left:775px;top:471px;width:36px;height:27px;"><span class="k" style="color:#008000">負</span></div>
<div class="c" style="left:812px;top:471px;width:37px;height:27px;"><span class="k" style="color:#008000">輸</span></div>
<div class="c" style="left:850px;top:471px;width:54px;height:27px;"><span class="k" style="color:#ff0000">大</span></div>
<div style="left:66px;top:499px;width:381px;height:27px;background:#f0f0f0"></div>
<div style="left:446px;top:499px;width:147px;height:27px;background:#fdf9f7"></div>
<div style="left:592px;top:499px;width:183px;height:27px;background:#eef7fc"></div>
<div style="left:774px;top:499px;width:130px;height:27px;background:#f0f0f0"></div>
<div style="left:0px;top:499px;width:66px;height:27px;background:#00a3a3"></div>
<div style="left:0px;top:526px;width:904px;height:1px;background:#bdbdbd"></div>
<div style="left:66px;top:499px;width:1px;height:27px;background:#bdbdbd"></div>
<div style="left:139px;top:499px;width:1px;height:27px;background:#bdbdbd"></div>
<div style="left:237px;top:499px;width:1px;height:27px;background:#bdbdbd"></div>
<div style="left:321px;top:499px;width:1px;height:27px;background:#bdbdbd"></div>
<div style="left:359px;top:499px;width:1px;height:27px;background:#bdbdbd"></div>
<div style="left:446px;top:499px;width:1px;height:27px;background:#bdbdbd"></div>
<div style="left:489px;top:499px;width:1px;height:27px;background:#bdbdbd"></div>
<div style="left:548px;top:499px;width:1px;height:27px;background:#bdbdbd"></div>
<div style="left:592px;top:499px;width:1px;height:27px;background:#bdbdbd"></div>
<div style="left:656px;top:499px;width:1px;height:27px;background:#bdbdbd"></div>
<div style="left:721px;top:499px;width:1px;height:27px;background:#bdbdbd"></div>
<div style="left:774px;top:499px;width:1px;height:27px;background:#bdbdbd"></div>
<div style="left:811px;top:499px;width:1px;height:27px;background:#bdbdbd"></div>
<div style="left:849px;top:499px;width:1px;height:27px;background:#bdbdbd"></div>
<div class="c" style="left:-5px;top:499px;width:71px;height:27px;color:#fff">球会友谊</div>
<div class="c" style="left:67px;top:499px;width:72px;height:27px;">25-10-08</div>
<div class="c" style="left:140px;top:499px;width:97px;height:27px;color:#000"><span class="k" style="color:#008000">沃尔夫斯堡</span></div>
<div class="c" style="left:238px;top:499px;width:83px;height:27px;"><span style="color:#ff0000">0-2</span>(0-0)</div>
<div class="c" style="left:322px;top:499px;width:37px;height:27px;"></div>
<div class="c" style="left:360px;top:499px;width:86px;height:27px;color:#000">柏林赫塔</div>
<div class="c" style="left:447px;top:499px;width:42px;height:27px;"></div>
<div class="c" style="left:490px;top:499px;width:58px;height:27px;"></div>
<div class="c" style="left:549px;top:499px;width:43px;height:27px;"></div>
<div class="c" style="left:593px;top:499px;width:63px;height:27px;"></div>
<div class="c" style="left:657px;top:499px;width:64px;height:27px;"></div>
<div class="c" style="left:722px;top:499px;width:52px;height:27px;"></div>
<div class="c" style="left:775px;top:499px;width:36px;height:27px;"><span class="k" style="color:#008000">負</span></div>
<div class="c" style="left:812px;top:499px;width:37px;height:27px;"></div>
<div class="c" style="left:850px;top:499px;width:54px;height:27px;"></div>
<div style="left:66px;top:527px;width:381px;height:27px;background:#ffffff"></div>
<div style="left:446px;top:527px;width:147px;height:27px;background:#fdf9f7"></div>
<div style="left:592px;top:527px;width:183px;height:27px;background:#eef7fc"></div>
<div style="left:774px;top:527px;width:130px;height:27px;background:#ffffff"></div>
<div style="left:0px;top:527px;width:66px;height:27px;background:#990099"></div>
<div style="left:0px;top:554px;width:904px;height:1px;background:#bdbdbd"></div>
<div style="left:66px;top:527px;width:1px;height:27px;background:#bdbdbd"></div>
<div style="left:139px;top:527px;width:1px;height:27px;background:#bdbdbd"></div>
<div style="left:237px;top:527px;width:1px;height:27px;background:#bdbdbd"></div>
<div style="left:321px;top:527px;width:1px;height:27px;background:#bdbdbd"></div>
<div style="left:359px;top:527px;width:1px;height:27px;background:#bdbdbd"></div>
<div style="left:446px;top:527px;width:1px;height:27px;background:#bdbdbd"></div>
<div style="left:489px;top:527px;width:1px;height:27px;background:#bdbdbd"></div>
<div style="left:548px;top:527px;width:1px;height:27px;background:#bdbdbd"></div>
<div style="left:592px;top:527px;width:1px;height:27px;background:#bdbdbd"></div>
<div style="left:656px;top:527px;width:1px;height:27px;background:#bdbdbd"></div>
<div style="left:721px;top:527px;width:1px;height:27px;background:#bdbdbd"></div>
<div style="left:774px;top:527px;width:1px;height:27px;background:#bdbdbd"></div>
<div style="left:811px;top:527px;width:1px;height:27px;background:#bdbdbd"></div>
<div style="left:849px;top:527px;width:1px;height:27px;background:#bdbdbd"></div>
<div class="c" style="left:-5px;top:527px;width:71px;height:27px;color:#fff">德甲</div>
<div class="c" style="left:67px;top:527px;width:72px;height:27px;">25-10-04</div>
<div class="c" style="left:140px;top:527px;width:97px;height:27px;color:#000">奥斯堡</div>
<div class="c" style="left:238px;top:527px;width:83px;height:27px;"><span style="color:#ff0000">3-1</span>(1-0)</div>
<div class="c" style="left:322px;top:527px;width:37px;height:27px;">10-5</div>
<div class="c" style="left:360px;top:527px;width:86px;height:27px;color:#000"><span class="k" style="color:#008000">沃尔夫斯堡</span></div>
<div class="c" style="left:447px;top:527px;width:42px;height:27px;">0.89</div>
<div class="c" style="left:490px;top:527px;width:58px;height:27px;">平手</div>
<div class="c" style="left:549px;top:527px;width:43px;height:27px;">0.99</div>
<div class="c" style="left:593px;top:527px;width:63px;height:27px;">2.53</div>
<div class="c" style="left:657px;top:527px;width:64px;height:27px;">3.51</div>
<div class="c" style="left:722px;top:527px;width:52px;height:27px;">2.68</div>
<div class="c" style="left:775px;top:527px;width:36px;height:27px;"><span class="k" style="color:#008000">負</span></div>
<div class="c" style="left:812px;top:527px;width:37px;height:27px;"><span class="k" style="color:#008000">輸</span></div>
<div class="c" style="left:850px;top:527px;width:54px;height:27px;"><span class="k" style="color:#ff0000">大</span></div>
<div style="left:66px;top:555px;width:381px;height:27px;background:#f0f0f0"></div>
<div style="left:446px;top:555px;width:147px;height:27px;background:#fdf9f7"></div>
<div style="left:592px;top:555px;width:183px;height:27px;background:#eef7fc"></div>
<div style="left:774px;top:555px;width:130px;height:27px;background:#f0f0f0"></div>
<div style="left:0px;top:555px;width:66px;height:27px;background:#990099"></div>
<div style="left:0px;top:582px;width:904px;height:1px;background:#bdbdbd"></div>
<div style="left:66px;top:555px;width:1px;height:27px;background:#bdbdbd"></div>
<div style="left:139px;top:555px;width:1px;height:27px;background:#bdbdbd"></div>
<div style="left:237px;top:555px;width:1px;height:27px;background:#bdbdbd"></div>
<div style="left:321px;top:555px;width:1px;height:27px;background:#bdbdbd"></div>
<div style="left:359px;top:555px;width:1px;height:27px;background:#bdbdbd"></div>
<div style="left:446px;top:555px;width:1px;height:27px;background:#bdbdbd"></div>
<div style="left:489px;top:555px;width:1px;height:27px;background:#bdbdbd"></div>
<div style="left:548px;top:555px;width:1px;height:27px;background:#bdbdbd"></div>
<div style="left:592px;top:555px;width:1px;height:27px;background:#bdbdbd"></div>
<div style="left:656px;top:555px;width:1px;height:27px;background:#bdbdbd"></div>
<div style="left:721px;top:555px;width:1px;height:27px;background:#bdbdbd"></div>
<div style="left:774px;top:555px;width:1px;height:27px;background:#bdbdbd"></div>
<div style="left:811px;top:555px;width:1px;height:27px;background:#bdbdbd"></div>
<div style="left:849px;top:555px;width:1px;height:27px;background:#bdbdbd"></div>
<div class="c" style="left:-5px;top:555px;width:71px;height:27px;color:#fff">德甲</div>
<div class="c" style="left:67px;top:555px;width:72px;height:27px;">25-09-27</div>
<div class="c" style="left:140px;top:555px;width:97px;height:27px;color:#000"><span class="k" style="color:#008000">沃尔夫斯堡</span></div>
<div class="c" style="left:238px;top:555px;width:83px;height:27px;"><span style="color:#ff0000">0-1</span>(0-1)</div>
<div class="c" style="left:322px;top:555px;width:37px;height:27px;">6-11</div>
<div class="c" style="left:360px;top:555px;width:86px;height:27px;color:#000">RB莱比锡</div>
<div class="c" style="left:447px;top:555px;width:42px;height:27px;">1.00</div>
<div class="c" style="left:490px;top:555px;width:58px;height:27px;">平手</div>
<div class="c" style="left:549px;top:555px;width:43px;height:27px;">0.88</div>
<div class="c" style="left:593px;top:555px;width:63px;height:27px;">2.63</div>
<div class="c" style="left:657px;top:555px;width:64px;height:27px;">3.67</div>
<div class="c" style="left:722px;top:555px;width:52px;height:27px;">2.50</div>
<div class="c" style="left:775px;top:555px;width:36px;height:27px;"><span class="k" style="color:#008000">負</span></div>
<div class="c" style="left:812px;top:555px;width:37px;height:27px;"><span class="k" style="color:#008000">輸</span></div>
<div class="c" style="left:850px;top:555px;width:54px;height:27px;"><span class="k" style="color:#008000">小</span></div>
<div style="left:66px;top:583px;width:381px;height:27px;background:#ffffff"></div>
<div style="left:446px;top:583px;width:147px;height:27px;background:#fdf9f7"></div>
<div style="left:592px;top:583px;width:183px;height:27px;background:#eef7fc"></div>
<div style="left:774px;top:583px;width:130px;height:27px;background:#ffffff"></div>
<div style="left:0px;top:583px;width:66px;height:27px;background:#990099"></div>
<div style="left:0px;top:610px;width:904px;height:1px;background:#bdbdbd"></div>
<div style="left:66px;top:583px;width:1px;height:27px;background:#bdbdbd"></div>
<div style="left:139px;top:583px;width:1px;height:27px;background:#bdbdbd"></div>
<div style="left:237px;top:583px;width:1px;height:27px;background:#bdbdbd"></div>
<div style="left:321px;top:583px;width:1px;height:27px;background:#bdbdbd"></div>
<div style="left:359px;top:583px;width:1px;height:27px;background:#bdbdbd"></div>
<div style="left:446px;top:583px;width:1px;height:27px;background:#bdbdbd"></div>
<div style="left:489px;top:583px;width:1px;height:27px;background:#bdbdbd"></div>
<div style="left:548px;top:583px;width:1px;height:27px;background:#bdbdbd"></div>
<div style="left:592px;top:583px;width:1px;height:27px;background:#bdbdbd"></div>
<div style="left:656px;top:583px;width:1px;height:27px;background:#bdbdbd"></div>
<div style="left:721px;top:583px;width:1px;height:27px;background:#bdbdbd"></div>
<div style="left:774px;top:583px;width:1px;height:27px;background:#bdbdbd"></div>
<div style="left:811px;top:583px;width:1px;height:27px;background:#bdbdbd"></div>
<div style="left:849px;top:583px;width:1px;height:27px;background:#bdbdbd"></div>
<div class="c" style="left:-5px;top:583px;width:71px;height:27px;color:#fff">德甲</div>
<div class="c" style="left:67px;top:583px;width:72px;height:27px;">25-09-22</div>
<div class="c" style="left:140px;top:583px;width:97px;height:27px;color:#000">多特蒙德</div>
<div class="c" style="left:238px;top:583px;width:83px;height:27px;"><span style="color:#ff0000">1-0</span>(1-0)</div>
<div class="c" style="left:322px;top:583px;width:37px;height:27px;">9-3</div>
<div class="c" style="left:360px;top:583px;width:86px;height:27px;color:#000"><span class="k" style="color:#008000">沃尔夫斯堡</span></div>
<div class="c" style="left:447px;top:583px;width:42px;height:27px;">0.84</div>
<div class="c" style="left:490px;top:583px;width:58px;height:27px;">一球</div>
<div class="c" style="left:549px;top:583px;width:43px;height:27px;">1.04</div>
<div class="c" style="left:593px;top:583px;width:63px;height:27px;">1.53</div>
<div class="c" style="left:657px;top:583px;width:64px;height:27px;">4.68</div>
<div class="c" style="left:722px;top:583px;width:52px;height:27px;">5.41</div>
<div class="c" style="left:775px;top:583px;width:36px;height:27px;"><span class="k" style="color:#008000">負</span></div>
<div class="c" style="left:812px;top:583px;width:37px;height:27px;"><span class="k" style="color:#0000ff">走</span></div>
<div class="c" style="left:850px;top:583px;width:54px;height:27px;"><span class="k" style="color:#008000">小</span></div>
<div style="left:66px;top:611px;width:381px;height:27px;background:#f0f0f0"></div>
<div style="left:446px;top:611px;width:147px;height:27px;background:#fdf9f7"></div>
<div style="left:592px;top:611px;width:183px;height:27px;background:#eef7fc"></div>
<div style="left:774px;top:611px;width:130px;height:27px;background:#f0f0f0"></div>
<div style="left:0px;top:611px;width:66px;height:27px;background:#990099"></div>
<div style="left:0px;top:638px;width:904px;height:1px;background:#bdbdbd"></div>
<div style="left:66px;top:611px;width:1px;height:27px;background:#bdbdbd"></div>
<div style="left:139px;top:611px;width:1px;height:27px;background:#bdbdbd"></div>
<div style="left:237px;top:611px;width:1px;height:27px;background:#bdbdbd"></div>
<div style="left:321px;top:611px;width:1px;height:27px;background:#bdbdbd"></div>
<div style="left:359px;top:611px;width:1px;height:27px;background:#bdbdbd"></div>
<div style="left:446px;top:611px;width:1px;height:27px;background:#bdbdbd"></div>
<div style="left:489px;top:611px;width:1px;height:27px;background:#bdbdbd"></div>
<div style="left:548px;top:611px;width:1px;height:27px;background:#bdbdbd"></div>
<div style="left:592px;top:611px;width:1px;height:27px;background:#bdbdbd"></div>
<div style="left:656px;top:611px;width:1px;height:27px;background:#bdbdbd"></div>
<div style="left:721px;top:611px;width:1px;height:27px;background:#bdbdbd"></div>
<div style="left:774px;top:611px;width:1px;height:27px;background:#bdbdbd"></div>
<div style="left:811px;top:611px;width:1px;height:27px;background:#bdbdbd"></div>
<div style="left:849px;top:611px;width:1px;height:27px;background:#bdbdbd"></div>
<div class="c" style="left:-5px;top:611px;width:71px;height:27px;color:#fff">德甲</div>
<div class="c" style="left:67px;top:611px;width:72px;height:27px;">25-09-13</div>
<div class="c" style="left:140px;top:611px;width:97px;height:27px;color:#000"><span class="k" style="color:#008000">沃尔夫斯堡</span></div>
<div class="c" style="left:238px;top:611px;width:83px;height:27px;"><span style="color:#ff0000">3-3</span>(1-1)</div>
<div class="c" style="left:322px;top:611px;width:37px;height:27px;">7-4</div>
<div class="c" style="left:360px;top:611px;width:86px;height:27px;color:#000">科隆</div>
<div class="c" style="left:447px;top:611px;width:42px;height:27px;">0.97</div>
<div class="c" style="left:490px;top:611px;width:58px;height:27px;">半球</div>
<div class="c" style="left:549px;top:611px;width:43px;height:27px;">0.92</div>
<div class="c" style="left:593px;top:611px;width:63px;height:27px;">1.96</div>
<div class="c" style="left:657px;top:611px;width:64px;height:27px;">3.58</div>
<div class="c" style="left:722px;top:611px;width:52px;height:27px;">3.75</div>
<div class="c" style="left:775px;top:611px;width:36px;height:27px;"><span class="k" style="color:#0000ff">平</span></div>
<div class="c" style="left:812px;top:611px;width:37px;height:27px;"><span class="k" style="color:#008000">輸</span></div>
<div class="c" style="left:850px;top:611px;width:54px;height:27px;"><span class="k" style="color:#ff0000">大</span></div>
<div style="left:66px;top:639px;width:381px;height:27px;background:#ffffff"></div>
<div style="left:446px;top:639px;width:147px;height:27px;background:#fdf9f7"></div>
<div style="left:592px;top:639px;width:183px;height:27px;background:#eef7fc"></div>
<div style="left:774px;top:639px;width:130px;height:27px;background:#ffffff"></div>
<div style="left:0px;top:639px;width:66px;height:27px;background:#990099"></div>
<div style="left:0px;top:666px;width:904px;height:1px;background:#bdbdbd"></div>
<div style="left:66px;top:639px;width:1px;height:27px;background:#bdbdbd"></div>
<div style="left:139px;top:639px;width:1px;height:27px;background:#bdbdbd"></div>
<div style="left:237px;top:639px;width:1px;height:27px;background:#bdbdbd"></div>
<div style="left:321px;top:639px;width:1px;height:27px;background:#bdbdbd"></div>
<div style="left:359px;top:639px;width:1px;height:27px;background:#bdbdbd"></div>
<div style="left:446px;top:639px;width:1px;height:27px;background:#bdbdbd"></div>
<div style="left:489px;top:639px;width:1px;height:27px;background:#bdbdbd"></div>
<div style="left:548px;top:639px;width:1px;height:27px;background:#bdbdbd"></div>
<div style="left:592px;top:639px;width:1px;height:27px;background:#bdbdbd"></div>
<div style="left:656px;top:639px;width:1px;height:27px;background:#bdbdbd"></div>
<div style="left:721px;top:639px;width:1px;height:27px;background:#bdbdbd"></div>
<div style="left:774px;top:639px;width:1px;height:27px;background:#bdbdbd"></div>
<div style="left:811px;top:639px;width:1px;height:27px;background:#bdbdbd"></div>
<div style="left:849px;top:639px;width:1px;height:27px;background:#bdbdbd"></div>
<div class="c" style="left:-5px;top:639px;width:71px;height:27px;color:#fff">德甲</div>
<div class="c" style="left:67px;top:639px;width:72px;height:27px;">25-08-31</div>
<div class="c" style="left:140px;top:639px;width:97px;height:27px;color:#000"><span class="bd">1</span><span class="k" style="color:#008000">沃尔夫斯堡</span></div>
<div class="c" style="left:238px;top:639px;width:83px;height:27px;"><span style="color:#ff0000">1-1</span>(1-0)</div>
<div class="c" style="left:322px;top:639px;width:37px;height:27px;">3-10</div>
<div class="c" style="left:360px;top:639px;width:86px;height:27px;color:#000">美因茨05</div>
<div class="c" style="left:447px;top:639px;width:42px;height:27px;">0.93</div>
<div class="c" style="left:490px;top:639px;width:58px;height:27px;">平/半</div>
<div class="c" style="left:549px;top:639px;width:43px;height:27px;">0.96</div>
<div class="c" style="left:593px;top:639px;width:63px;height:27px;">2.13</div>
<div class="c" style="left:657px;top:639px;width:64px;height:27px;">3.55</div>
<div class="c" style="left:722px;top:639px;width:52px;height:27px;">3.29</div>
<div class="c" style="left:775px;top:639px;width:36px;height:27px;"><span class="k" style="color:#0000ff">平</span></div>
<div class="c" style="left:812px;top:639px;width:37px;height:27px;"><span class="k" style="color:#008000">輸</span></div>
<div class="c" style="left:850px;top:639px;width:54px;height:27px;"><span class="k" style="color:#008000">小</span></div>
<div style="left:66px;top:667px;width:381px;height:27px;background:#f0f0f0"></div>
<div style="left:446px;top:667px;width:147px;height:27px;background:#fdf9f7"></div>
<div style="left:592px;top:667px;width:183px;height:27px;background:#eef7fc"></div>
<div style="left:774px;top:667px;width:130px;height:27px;background:#f0f0f0"></div>
<div style="left:0px;top:667px;width:66px;height:27px;background:#990099"></div>
<div style="left:0px;top:694px;width:904px;height:1px;background:#bdbdbd"></div>
<div style="left:66px;top:667px;width:1px;height:27px;background:#bdbdbd"></div>
<div style="left:139px;top:667px;width:1px;height:27px;background:#bdbdbd"></div>
<div style="left:237px;top:667px;width:1px;height:27px;background:#bdbdbd"></div>
<div style="left:321px;top:667px;width:1px;height:27px;background:#bdbdbd"></div>
<div style="left:359px;top:667px;width:1px;height:27px;background:#bdbdbd"></div>
<div style="left:446px;top:667px;width:1px;height:27px;background:#bdbdbd"></div>
<div style="left:489px;top:667px;width:1px;height:27px;background:#bdbdbd"></div>
<div style="left:548px;top:667px;width:1px;height:27px;background:#bdbdbd"></div>
<div style="left:592px;top:667px;width:1px;height:27px;background:#bdbdbd"></div>
<div style="left:656px;top:667px;width:1px;height:27px;background:#bdbdbd"></div>
<div style="left:721px;top:667px;width:1px;height:27px;background:#bdbdbd"></div>
<div style="left:774px;top:667px;width:1px;height:27px;background:#bdbdbd"></div>
<div style="left:811px;top:667px;width:1px;height:27px;background:#bdbdbd"></div>
<div style="left:849px;top:667px;width:1px;height:27px;background:#bdbdbd"></div>
<div class="c" style="left:-5px;top:667px;width:71px;height:27px;color:#fff">德甲</div>
<div class="c" style="left:67px;top:667px;width:72px;height:27px;">25-08-23</div>
<div class="c" style="left:140px;top:667px;width:97px;height:27px;color:#000">海登海默</div>
<div class="c" style="left:238px;top:667px;width:83px;height:27px;"><span style="color:#ff0000">1-3</span>(1-1)</div>
<div class="c" style="left:322px;top:667px;width:37px;height:27px;">2-5</div>
<div class="c" style="left:360px;top:667px;width:86px;height:27px;color:#000"><span class="k" style="color:#008000">沃尔夫斯堡</span></div>
<div class="c" style="left:447px;top:667px;width:42px;height:27px;">1.04</div>
<div class="c" style="left:490px;top:667px;width:58px;height:27px;">平手</div>
<div class="c" style="left:549px;top:667px;width:43px;height:27px;">0.85</div>
<div class="c" style="left:593px;top:667px;width:63px;height:27px;">2.76</div>
<div class="c" style="left:657px;top:667px;width:64px;height:27px;">3.39</div>
<div class="c" style="left:722px;top:667px;width:52px;height:27px;">2.52</div>
<div class="c" style="left:775px;top:667px;width:36px;height:27px;"><span class="k" style="color:#ff0000">勝</span></div>
<div class="c" style="left:812px;top:667px;width:37px;height:27px;"><span class="k" style="color:#ff0000">贏</span></div>
<div class="c" style="left:850px;top:667px;width:54px;height:27px;"><span class="k" style="color:#ff0000">大</span></div>
<div style="left:66px;top:695px;width:381px;height:27px;background:#ffffff"></div>
<div style="left:446px;top:695px;width:147px;height:27px;background:#fdf9f7"></div>
<div style="left:592px;top:695px;width:183px;height:27px;background:#eef7fc"></div>
<div style="left:774px;top:695px;width:130px;height:27px;background:#ffffff"></div>
<div style="left:0px;top:695px;width:66px;height:27px;background:#a00000"></div>
<div style="left:0px;top:722px;width:904px;height:1px;background:#bdbdbd"></div>
<div style="left:66px;top:695px;width:1px;height:27px;background:#bdbdbd"></div>
<div style="left:139px;top:695px;width:1px;height:27px;background:#bdbdbd"></div>
<div style="left:237px;top:695px;width:1px;height:27px;background:#bdbdbd"></div>
<div style="left:321px;top:695px;width:1px;height:27px;background:#bdbdbd"></div>
<div style="left:359px;top:695px;width:1px;height:27px;background:#bdbdbd"></div>
<div style="left:446px;top:695px;width:1px;height:27px;background:#bdbdbd"></div>
<div style="left:489px;top:695px;width:1px;height:27px;background:#bdbdbd"></div>
<div style="left:548px;top:695px;width:1px;height:27px;background:#bdbdbd"></div>
<div style="left:592px;top:695px;width:1px;height:27px;background:#bdbdbd"></div>
<div style="left:656px;top:695px;width:1px;height:27px;background:#bdbdbd"></div>
<div style="left:721px;top:695px;width:1px;height:27px;background:#bdbdbd"></div>
<div style="left:774px;top:695px;width:1px;height:27px;background:#bdbdbd"></div>
<div style="left:811px;top:695px;width:1px;height:27px;background:#bdbdbd"></div>
<div style="left:849px;top:695px;width:1px;height:27px;background:#bdbdbd"></div>
<div class="c" style="left:-5px;top:695px;width:71px;height:27px;color:#fff">德国杯</div>
<div class="c" style="left:67px;top:695px;width:72px;height:27px;">25-08-16</div>
<div class="c" style="left:140px;top:695px;width:97px;height:27px;color:#000">赫梅林根</div>
<div class="c" style="left:238px;top:695px;width:83px;height:27px;"><span style="color:#ff0000">0-9</span>(0-3)</div>
<div class="c" style="left:322px;top:695px;width:37px;height:27px;">1-8</div>
<div class="c" style="left:360px;top:695px;width:86px;height:27px;color:#000"><span class="k" style="color:#008000">沃尔夫斯堡</span></div>
<div class="c" style="left:447px;top:695px;width:42px;height:27px;"></div>
<div class="c" style="left:490px;top:695px;width:58px;height:27px;"></div>
<div class="c" style="left:549px;top:695px;width:43px;height:27px;"></div>
<div class="c" style="left:593px;top:695px;width:63px;height:27px;">55.04</div>
<div class="c" style="left:657px;top:695px;width:64px;height:27px;">33.65</div>
<div class="c" style="left:722px;top:695px;width:52px;height:27px;">1.01</div>
<div class="c" style="left:775px;top:695px;width:36px;height:27px;"><span class="k" style="color:#ff0000">勝</span></div>
<div class="c" style="left:812px;top:695px;width:37px;height:27px;"></div>
<div class="c" style="left:850px;top:695px;width:54px;height:27px;"></div>
<div style="left:66px;top:723px;width:381px;height:27px;background:#f0f0f0"></div>
<div style="left:446px;top:723px;width:147px;height:27px;background:#fdf9f7"></div>
<div style="left:592px;top:723px;width:183px;height:27px;background:#eef7fc"></div>
<div style="left:774px;top:723px;width:130px;height:27px;background:#f0f0f0"></div>
<div style="left:0px;top:723px;width:66px;height:27px;background:#00a3a3"></div>
<div style="left:0px;top:750px;width:904px;height:1px;background:#bdbdbd"></div>
<div style="left:66px;top:723px;width:1px;height:27px;background:#bdbdbd"></div>
<div style="left:139px;top:723px;width:1px;height:27px;background:#bdbdbd"></div>
<div style="left:237px;top:723px;width:1px;height:27px;background:#bdbdbd"></div>
<div style="left:321px;top:723px;width:1px;height:27px;background:#bdbdbd"></div>
<div style="left:359px;top:723px;width:1px;height:27px;background:#bdbdbd"></div>
<div style="left:446px;top:723px;width:1px;height:27px;background:#bdbdbd"></div>
<div style="left:489px;top:723px;width:1px;height:27px;background:#bdbdbd"></div>
<div style="left:548px;top:723px;width:1px;height:27px;background:#bdbdbd"></div>
<div style="left:592px;top:723px;width:1px;height:27px;background:#bdbdbd"></div>
<div style="left:656px;top:723px;width:1px;height:27px;background:#bdbdbd"></div>
<div style="left:721px;top:723px;width:1px;height:27px;background:#bdbdbd"></div>
<div style="left:774px;top:723px;width:1px;height:27px;background:#bdbdbd"></div>
<div style="left:811px;top:723px;width:1px;height:27px;background:#bdbdbd"></div>
<div style="left:849px;top:723px;width:1px;height:27px;background:#bdbdbd"></div>
<div class="c" style="left:-5px;top:723px;width:71px;height:27px;color:#fff">球会友谊</div>
<div class="c" style="left:67px;top:723px;width:72px;height:27px;">25-08-10</div>
<div class="c" style="left:140px;top:723px;width:97px;height:27px;color:#000">布莱顿(中)</div>
<div class="c" style="left:238px;top:723px;width:83px;height:27px;"><span style="color:#ff0000">2-1</span>(1-0)</div>
<div class="c" style="left:322px;top:723px;width:37px;height:27px;">4-1</div>
<div class="c" style="left:360px;top:723px;width:86px;height:27px;color:#000"><span class="k" style="color:#008000">沃尔夫斯堡</span></div>
<div class="c" style="left:447px;top:723px;width:42px;height:27px;">0.75</div>
<div class="c" style="left:490px;top:723px;width:58px;height:27px;">半/一</div>
<div class="c" style="left:549px;top:723px;width:43px;height:27px;">1.07</div>
<div class="c" style="left:593px;top:723px;width:63px;height:27px;">1.68</div>
<div class="c" style="left:657px;top:723px;width:64px;height:27px;">3.97</div>
<div class="c" style="left:722px;top:723px;width:52px;height:27px;">4.32</div>
<div class="c" style="left:775px;top:723px;width:36px;height:27px;"><span class="k" style="color:#008000">負</span></div>
<div class="c" style="left:812px;top:723px;width:37px;height:27px;"><span class="k" style="color:#008000">輸</span></div>
<div class="c" style="left:850px;top:723px;width:54px;height:27px;"><span class="k" style="color:#0000ff">走</span></div></body></html>
